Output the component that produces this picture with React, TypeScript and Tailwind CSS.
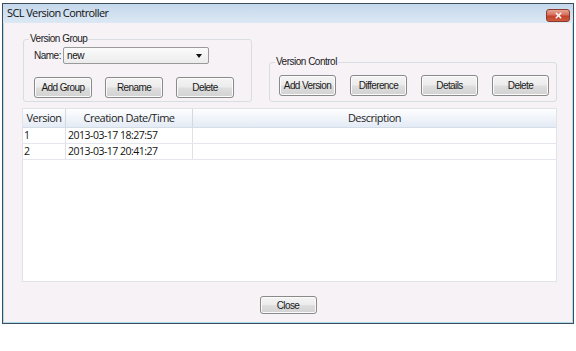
import { X } from "lucide-react";

const ui = { fontFamily: '"Liberation Sans", Arial, sans-serif' };
const segoe = { fontFamily: '"Open Sans", "Noto Sans", sans-serif' };

const rows = [
  { version: "1", created: "2013-03-17 18:27:57", description: "" },
  { version: "2", created: "2013-03-17 20:41:27", description: "" },
];

function WinButton({ label, width = "w-[58px]", height = "h-[21px]" }: { label: string; width?: string; height?: string }) {
  return (
    <button
      type="button"
      style={ui}
      className={`${width} ${height} flex items-center justify-center rounded-[3px] border border-[#8a8a8a] bg-[linear-gradient(#f4f4f4_0%,#ececec_48%,#dedede_52%,#d2d2d2_100%)] text-[10px] tracking-[-0.6px] text-[#1a1a1a] shadow-[inset_0_0_0_1px_#fbfbfb]`}
    >
      {label}
    </button>
  );
}

function GroupBox({ title, className, children }: { title: string; className: string; children: React.ReactNode }) {
  return (
    <div className={`relative rounded-[3px] border border-[#d6dde3] ${className}`}>
      <span
        style={ui}
        className="absolute -top-[7px] left-[5px] bg-[#f6f2f6] px-[1px] text-[10px] leading-[12px] tracking-[-0.5px] text-[#1a1a1a]"
      >
        {title}
      </span>
      {children}
    </div>
  );
}

export default function App() {
  return (
    <div className="h-[351px] w-[576px] overflow-hidden bg-white pl-[2px] pt-[3px]">
      <div className="flex h-[321px] w-[572px] flex-col border border-[#3d4d5c] bg-[#f6f2f6]">
        {/* title bar */}
        <div className="flex h-[19px] items-center justify-between bg-linear-to-b from-[#c4d8ec] to-[#dce8f4] pl-[4px] pr-[3px]">
          <span style={segoe} className="text-[11px] tracking-[-0.6px] text-[#111]">
            SCL Version Controller
          </span>
          <div className="mt-[4px] flex h-[13px] w-[24px] items-center justify-center rounded-[3px] border border-[#8b3a2e] bg-[linear-gradient(#e7a394_0%,#d6705c_45%,#c3412c_55%,#cf5b3f_100%)]">
            <X className="h-[9px] w-[9px] text-white" strokeWidth={4} />
          </div>
        </div>

        {/* client area */}
        <div className="flex flex-1 flex-col border-x border-b border-[#a9dcef] pl-[17px]">
          <div className="mt-[16px] flex items-end">
            <GroupBox title="Version Group" className="ml-[2px] h-[63px] w-[229px] pl-[10px] pt-[7px]">
              <div className="flex h-[17px] items-center">
                <span style={ui} className="w-[29px] text-[10px] tracking-[-0.5px] text-[#1a1a1a]">
                  Name:
                </span>
                <div className="flex h-[17px] w-[146px] items-center justify-between rounded-[2px] border border-[#9a9a9a] bg-[linear-gradient(#fbfbfb,#ececec)] pl-[3px] pr-[6px]">
                  <span style={ui} className="text-[10px] tracking-[-0.4px] text-[#111]">
                    new
                  </span>
                  <span className="h-0 w-0 border-x-[3px] border-t-[4px] border-x-transparent border-t-[#111]" />
                </div>
              </div>
              <div className="mt-[13px] flex gap-[13px]">
                <WinButton label="Add Group" />
                <WinButton label="Rename" />
                <WinButton label="Delete" />
              </div>
            </GroupBox>

            <GroupBox title="Version Control" className="ml-[17px] h-[40px] w-[288px] pl-[9px] pt-[12px]">
              <div className="flex gap-[14px]">
                <WinButton label="Add Version" width="w-[57px]" />
                <WinButton label="Difference" width="w-[57px]" />
                <WinButton label="Details" width="w-[57px]" />
                <WinButton label="Delete" width="w-[57px]" />
              </div>
            </GroupBox>
          </div>

          {/* version table */}
          <div className="mt-[6px] ml-[1px] flex h-[174px] w-[535px] flex-col border border-[#e2e2ea] bg-white">
            <div
              style={segoe}
              className="grid h-[19px] grid-cols-[43px_127px_1fr] border-b border-[#d5dde6] bg-linear-to-b from-[#fdfeff] to-[#e4ebf5] text-[11px] tracking-[-0.5px] text-[#1e1e1e]"
            >
              <div className="flex items-center justify-center border-r border-[#d5d9df]">Version</div>
              <div className="flex items-center justify-center border-r border-[#d5d9df]">Creation Date/Time</div>
              <div className="flex items-center justify-center">Description</div>
            </div>
            {rows.map((row) => (
              <div
                key={row.version}
                style={segoe}
                className="grid h-[16px] grid-cols-[43px_127px_1fr] border-b border-[#e6e6ee] text-[10.5px] leading-[15px] tracking-[-0.5px] text-[#111]"
              >
                <div className="border-r border-[#e0e0e8] pl-[1px]">{row.version}</div>
                <div className="border-r border-[#e0e0e8] pl-[2px]">{row.created}</div>
                <div className="pl-[2px]">{row.description}</div>
              </div>
            ))}
          </div>

          <div className="mt-[14px] flex justify-center pr-[17px]">
            <WinButton label="Close" width="w-[57px]" height="h-[18px]" />
          </div>
        </div>
      </div>
    </div>
  );
}
